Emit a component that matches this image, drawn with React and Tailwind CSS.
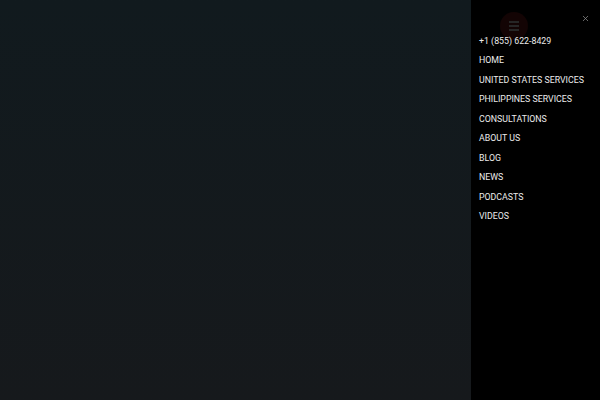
import React from 'react';
import { X } from 'lucide-react';

const links = [
  '+1 (855) 622-8429',
  'HOME',
  'UNITED STATES SERVICES',
  'PHILIPPINES SERVICES',
  'CONSULTATIONS',
  'ABOUT US',
  'BLOG',
  'NEWS',
  'PODCASTS',
  'VIDEOS',
];

const App = () => {
  return (
    <div className="flex h-[400px] w-full overflow-hidden font-['Roboto',sans-serif]">
      <div className="flex-1 bg-gradient-to-b from-[#111a1e] to-[#16191c]" />

      <div className="relative w-[129px] bg-black pl-2 pt-[32px]">
        {/* dimmed menu button behind the drawer */}
        <div className="absolute left-[29px] top-[12px] flex h-7 w-7 flex-col items-center justify-center gap-[2px] rounded-full bg-[#130404]">
          <span className="h-[2px] w-2.5 bg-[#262626]" />
          <span className="h-[2px] w-2.5 bg-[#262626]" />
          <span className="h-[2px] w-2.5 bg-[#262626]" />
        </div>

        <button className="absolute right-[10px] top-[14px] text-[#8a8a8a]">
          <X size={9} strokeWidth={2} />
        </button>

        <ul className="relative">
          {links.map((link, index) => (
            <li key={index} className="text-[8.8px] leading-[19.45px] text-[#ebebeb] whitespace-nowrap">
              {link}
            </li>
          ))}
        </ul>
      </div>
    </div>
  );
};

export default App;
